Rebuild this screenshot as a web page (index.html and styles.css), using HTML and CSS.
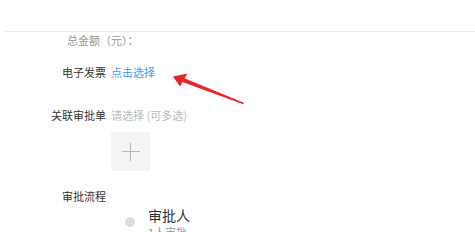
FILE: index.html
```html
<!DOCTYPE html>
<html>
<head>
<meta charset="utf-8">
<link rel="stylesheet" href="styles.css">
</head>
<body>
<div class="page">
  <div class="panel">
    <div class="total">总金额（元）：</div>
    <div class="row row-invoice">
      <div class="label">电子发票</div>
      <div class="link">点击选择</div>
    </div>
    <div class="row row-related">
      <div class="label">关联审批单</div>
      <div class="placeholder">请选择 (可多选)</div>
    </div>
    <div class="add-box"><span class="plus"></span></div>
    <div class="row row-flow">
      <div class="label">审批流程</div>
    </div>
    <div class="approver">
      <span class="dot"></span>
      <div class="approver-text">
        <div class="approver-title">审批人</div>
        <div class="approver-sub">1人审批</div>
      </div>
    </div>
  </div>
  <svg class="arrow" width="475" height="232" viewBox="0 0 475 232">
    <polygon points="183.7,78.0 182.3,82.0 243.3,104.3 243.9,102.7" fill="#e8262a"/>
    <polygon points="173,76.5 187.5,73.5 180,86.5" fill="#e8262a"/>
  </svg>
</div>
</body>
</html>
```
FILE: styles.css
```css
html, body {
  margin: 0;
  padding: 0;
  background: #fff;
}
body {
  font-family: "Noto Sans CJK SC", "Noto Sans", sans-serif;
  font-size: 11px;
  color: #333;
  width: 475px;
  height: 232px;
  overflow: hidden;
}
.page {
  position: relative;
  width: 475px;
  height: 232px;
  overflow: hidden;
}
.panel {
  margin-top: 31px;
  margin-left: 5px;
  border-top: 1px solid #ebebeb;
}
.total {
  padding-left: 62px;
  line-height: 16px;
  height: 16px;
  color: #999;
}
.row {
  display: flex;
  align-items: center;
  gap: 5px;
  line-height: 16px;
  height: 16px;
}
.label {
  width: 101px;
  text-align: right;
  color: #333;
}
.row-invoice { margin-top: 16px; }
.row-related { margin-top: 27px; }
.row-flow { margin-top: 17px; }
.link { color: #3f9cf0; }
.placeholder { color: #bbb; }
.add-box {
  margin-top: 9px;
  margin-left: 106px;
  width: 39px;
  height: 39px;
  background: #f4f4f4;
  display: flex;
  align-items: center;
  justify-content: center;
}
.plus {
  position: relative;
  width: 18px;
  height: 18px;
  display: flex;
  align-items: center;
  justify-content: center;
}
.plus::before, .plus::after {
  content: "";
  background: #b5b5b5;
  position: absolute;
}
.plus::before { width: 18px; height: 1px; }
.plus::after { width: 1px; height: 18px; }
.approver {
  margin-top: 2px;
  margin-left: 120px;
  display: flex;
  align-items: flex-start;
  gap: 13px;
}
.dot {
  margin-top: 11px;
  width: 10px;
  height: 10px;
  border-radius: 50%;
  background: #ddd;
  flex: none;
}
.approver-title {
  font-size: 14px;
  line-height: 19px;
  color: #333;
}
.approver-sub {
  font-size: 11px;
  line-height: 14px;
  color: #999;
}
.arrow {
  position: absolute;
  left: 0;
  top: 0;
}
```
